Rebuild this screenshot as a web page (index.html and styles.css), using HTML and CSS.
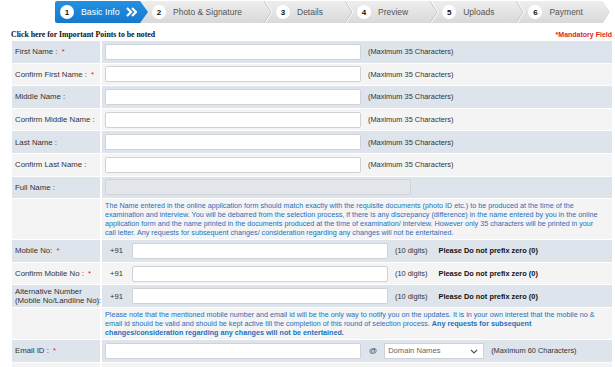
FILE: index.html
```html
<!DOCTYPE html>
<html lang="en">
<head>
  <meta charset="UTF-8" />
  <meta name="viewport" content="width=device-width, initial-scale=1.0" />
  <title>Online Application - Basic Info</title>
  <link rel="stylesheet" href="styles.css">
</head>
<body>
  <div class="wizard">
    <ul class="steps">
      <li class="step active">
        <span class="num">1</span><span class="name">Basic Info</span>
        <svg class="go" width="11" height="10" viewBox="0 0 11 10"><path d="M1 1l4 4-4 4M6 1l4 4-4 4" fill="none" stroke="#fff" stroke-width="2.2"/></svg>
      </li>
      <li class="step">
        <span class="num">2</span><span class="name">Photo &amp; Signature</span>
        <svg class="sep" width="9" height="22" viewBox="0 0 9 22"><path d="M0 0l7 11-7 11" fill="none" stroke="#c6c6c6" stroke-width="1"/><path d="M1.2 0l7 11-7 11" fill="none" stroke="#fbfbfb" stroke-width="1"/></svg>
      </li>
      <li class="step">
        <span class="num">3</span><span class="name">Details</span>
        <svg class="sep" width="9" height="22" viewBox="0 0 9 22"><path d="M0 0l7 11-7 11" fill="none" stroke="#c6c6c6" stroke-width="1"/><path d="M1.2 0l7 11-7 11" fill="none" stroke="#fbfbfb" stroke-width="1"/></svg>
      </li>
      <li class="step">
        <span class="num">4</span><span class="name">Preview</span>
        <svg class="sep" width="9" height="22" viewBox="0 0 9 22"><path d="M0 0l7 11-7 11" fill="none" stroke="#c6c6c6" stroke-width="1"/><path d="M1.2 0l7 11-7 11" fill="none" stroke="#fbfbfb" stroke-width="1"/></svg>
      </li>
      <li class="step">
        <span class="num">5</span><span class="name">Uploads</span>
        <svg class="sep" width="9" height="22" viewBox="0 0 9 22"><path d="M0 0l7 11-7 11" fill="none" stroke="#c6c6c6" stroke-width="1"/><path d="M1.2 0l7 11-7 11" fill="none" stroke="#fbfbfb" stroke-width="1"/></svg>
      </li>
      <li class="step">
        <span class="num">6</span><span class="name">Payment</span>
      </li>
    </ul>
  </div>

  <div class="topline">
    <a class="points" href="#">Click here for Important Points to be noted</a>
    <span class="mandatory">*Mandatory Field</span>
  </div>

  <table class="form">
    <colgroup><col class="c-lbl"><col></colgroup>
    <tr>
      <td class="lbl">First Name : <span class="req">*</span></td>
      <td class="fld"><div class="line"><input type="text" class="txt"><span class="hint">(Maximum 35 Characters)</span></div></td>
    </tr>
    <tr>
      <td class="lbl">Confirm First Name : <span class="req">*</span></td>
      <td class="fld"><div class="line"><input type="text" class="txt"><span class="hint">(Maximum 35 Characters)</span></div></td>
    </tr>
    <tr>
      <td class="lbl">Middle Name :</td>
      <td class="fld"><div class="line"><input type="text" class="txt"><span class="hint">(Maximum 35 Characters)</span></div></td>
    </tr>
    <tr>
      <td class="lbl">Confirm Middle Name :</td>
      <td class="fld"><div class="line"><input type="text" class="txt"><span class="hint">(Maximum 35 Characters)</span></div></td>
    </tr>
    <tr>
      <td class="lbl">Last Name :</td>
      <td class="fld"><div class="line"><input type="text" class="txt"><span class="hint">(Maximum 35 Characters)</span></div></td>
    </tr>
    <tr>
      <td class="lbl">Confirm Last Name :</td>
      <td class="fld"><div class="line"><input type="text" class="txt"><span class="hint">(Maximum 35 Characters)</span></div></td>
    </tr>
    <tr>
      <td class="lbl">Full Name :</td>
      <td class="fld"><div class="line"><input type="text" class="txt full" disabled></div></td>
    </tr>
    <tr class="note-row">
      <td class="lbl"></td>
      <td class="fld"><p class="note">The Name entered in the online application form should match exactly with the requisite documents (photo ID etc.) to be produced at the time of the examination and interview. You will be debarred from the selection process, if there is any discrepancy (difference) in the name entered by you in the online application form and the name printed in the documents produced at the time of examination/ interview. However only 35 characters will be printed in your call letter. Any requests for subsequent changes/ consideration regarding any changes will not be entertained.</p></td>
    </tr>
    <tr>
      <td class="lbl">Mobile No: <span class="req">*</span></td>
      <td class="fld"><div class="line"><span class="code">+91</span><input type="text" class="txt"><span class="hint">(10 digits)</span><span class="warn">Please Do not prefix zero (0)</span></div></td>
    </tr>
    <tr>
      <td class="lbl">Confirm Mobile No : <span class="req">*</span></td>
      <td class="fld"><div class="line"><span class="code">+91</span><input type="text" class="txt"><span class="hint">(10 digits)</span><span class="warn">Please Do not prefix zero (0)</span></div></td>
    </tr>
    <tr>
      <td class="lbl two">Alternative Number<br>(Mobile No/Landline No):</td>
      <td class="fld"><div class="line"><span class="code">+91</span><input type="text" class="txt"><span class="hint">(10 digits)</span><span class="warn">Please Do not prefix zero (0)</span></div></td>
    </tr>
    <tr class="note-row">
      <td class="lbl"></td>
      <td class="fld"><p class="note">Please note that the mentioned mobile number and email id will be the only way to notify you on the updates. It is in your own interest that the mobile no &amp; email id should be valid and should be kept active till the completion of this round of selection process. <b>Any requests for subsequent changes/consideration regarding any changes will not be entertained.</b></p></td>
    </tr>
    <tr>
      <td class="lbl">Email ID : <span class="req">*</span></td>
      <td class="fld">
        <div class="line">
          <input type="text" class="txt">
          <span class="at">@</span>
          <span class="select-wrap">
            <select class="domain"><option>Domain Names</option></select>
            <svg class="caret" width="8" height="5" viewBox="0 0 8 5"><path d="M1 1l3 3 3-3" fill="none" stroke="#555" stroke-width="1.2"/></svg>
          </span>
          <span class="hint">(Maximum 60 Characters)</span>
        </div>
      </td>
    </tr>
    <tr>
      <td class="lbl"></td>
      <td class="fld"></td>
    </tr>
  </table>
</body>
</html>
```

FILE: styles.css
```css
* {
  margin: 0;
  padding: 0;
  box-sizing: border-box;
}
body {
  font-family: "Liberation Sans", Arial, sans-serif;
  background: #ffffff;
  color: #333333;
}

/* wizard steps */
.wizard {
  padding: 1px 0 0 55px;
}
.steps {
  list-style: none;
  display: flex;
  width: 555px;
  height: 22px;
  background: linear-gradient(#eeeeee, #d9d9d9);
  clip-path: polygon(0 0, calc(100% - 7px) 0, 100% 50%, calc(100% - 7px) 100%, 0 100%);
  border-radius: 2px 0 0 2px;
}
.step {
  display: flex;
  align-items: center;
  padding-left: 3px;
  font-size: 8.5px;
  color: #555555;
}
.step .num {
  width: 14px;
  height: 14px;
  border-radius: 50%;
  background: #ffffff;
  color: #111111;
  font-weight: bold;
  font-size: 8px;
  display: flex;
  align-items: center;
  justify-content: center;
  margin-right: 7px;
}
.step .name {
  padding-right: 22px;
}
.step .sep {
  display: block;
}
.step.active {
  width: 93px;
  padding-left: 5px;
  background: linear-gradient(#2590e2, #1479cc);
  color: #ffffff;
  font-size: 8.8px;
  clip-path: polygon(0 0, 85px 0, 93px 50%, 85px 100%, 0 100%);
  border-radius: 2px 0 0 2px;
  margin-right: 1px;
}
.step.active .name {
  padding-right: 6px;
}
.step.active .go {
  display: block;
}

/* notice line */
.topline {
  display: flex;
  justify-content: space-between;
  align-items: center;
  height: 10px;
  margin-top: 6px;
  padding: 0 3px 0 11px;
}
.points {
  font-family: "Liberation Serif", "Times New Roman", serif;
  font-weight: bold;
  font-size: 7.8px;
  color: #111111;
  text-decoration: none;
}
.mandatory {
  font-weight: bold;
  font-size: 7px;
  color: #e11d1d;
}

/* form table */
.form {
  border-collapse: separate;
  border-spacing: 2px 1px;
  table-layout: fixed;
  width: 604px;
  margin: 1px 0 0 10px;
}
.c-lbl {
  width: 88px;
}
.form tr:nth-child(odd) td {
  background: #dde4ec;
}
.form tr:nth-child(even) td {
  background: #f4f4f4;
}
.form td {
  height: 21.6px;
  vertical-align: middle;
}
.lbl {
  padding-left: 3px;
  font-size: 7.8px;
  color: #333333;
  white-space: nowrap;
}
.lbl.two {
  line-height: 9px;
}
.req {
  color: #e01b1b;
  margin-left: 2px;
}
.fld {
  padding-left: 3px;
}
.line {
  display: flex;
  align-items: center;
}
.txt {
  width: 256px;
  height: 16px;
  border: 1px solid #cfd3d7;
  border-radius: 2px;
  background: #ffffff;
  outline: none;
}
.txt.full {
  width: 306px;
  background: #e3e7eb;
  border-color: #cfd4d9;
}
.hint {
  font-size: 7.4px;
  color: #333333;
  margin-left: 7px;
}
.warn {
  font-size: 7.4px;
  font-weight: bold;
  color: #111111;
  margin-left: 11px;
}
.code {
  width: 27px;
  padding-left: 5px;
  font-size: 7.6px;
  color: #333333;
}
.note {
  font-size: 7.2px;
  line-height: 9px;
  color: #1f70b9;
  padding: 2px 8px 2px 0;
}
.note b {
  font-weight: bold;
}
.note-row .fld {
  vertical-align: top;
}
.at {
  font-size: 8px;
  color: #444444;
  margin: 0 7px 0 8px;
}
.select-wrap {
  position: relative;
  display: block;
}
.domain {
  display: block;
  appearance: none;
  -webkit-appearance: none;
  width: 100px;
  height: 16px;
  border: 1px solid #cfd3d7;
  background: #ffffff;
  font-family: "Liberation Sans", Arial, sans-serif;
  font-size: 7.6px;
  color: #666666;
  padding-left: 3px;
  outline: none;
}
.caret {
  position: absolute;
  right: 6px;
  top: 6px;
}
```
